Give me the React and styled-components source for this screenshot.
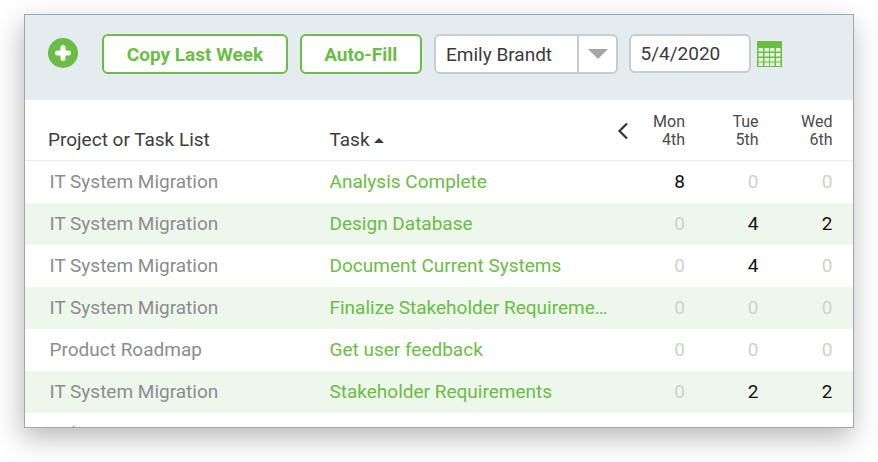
import React from "react";
import styled, { createGlobalStyle } from "styled-components";

const Global = createGlobalStyle`
  html, body { margin: 0; padding: 0; background: #fff; }
  body { width: 878px; height: 462px; overflow: hidden; font-family: Roboto, "Liberation Sans", sans-serif; }
  * { box-sizing: border-box; }
`;

const Page = styled.div`
  width: 878px;
  height: 462px;
  padding: 14px 24px 0;
`;
const Card = styled.div`
  width: 830px;
  height: 414px;
  border: 1px solid #a3a6a6;
  background: #fff;
  overflow: hidden;
  box-shadow: -2px 10px 26px rgba(0, 0, 0, 0.28);
`;
const Toolbar = styled.div`
  height: 85px;
  background: #e5ecef;
  display: flex;
  align-items: flex-start;
  padding: 19px 0 0 23px;
`;
const AddButton = styled.div`
  width: 30px;
  height: 30px;
  margin: 4px 24px 0 0;
  flex: none;
`;
const OutlineButton = styled.div`
  height: 40px;
  width: ${(p) => p.$w}px;
  margin-right: ${(p) => p.$gap}px;
  border: 2px solid #6abd45;
  border-radius: 6px;
  background: #fff;
  color: #6abd45;
  font-size: 19px;
  font-weight: 700;
  display: flex;
  align-items: center;
  justify-content: center;
`;
const Select = styled.div`
  width: 184px;
  height: 40px;
  margin-right: 11px;
  background: #fff;
  border: 2px solid #c9cccd;
  border-radius: 6px;
  display: flex;
  align-items: stretch;
  color: #3a3a3a;
  font-size: 19px;
`;
const SelectValue = styled.div`
  width: 143px;
  padding-left: 10px;
  display: flex;
  align-items: center;
  border-right: 2px solid #c9cccd;
`;
const SelectArrow = styled.div`
  flex: 1;
  display: flex;
  align-items: center;
  justify-content: center;
  &::after {
    content: "";
    border-left: 10px solid transparent;
    border-right: 10px solid transparent;
    border-top: 10px solid #a5a5a5;
  }
`;
const DateInput = styled.div`
  width: 122px;
  height: 39px;
  margin-right: 6px;
  padding-left: 9.5px;
  background: #fff;
  border: 2px solid #c9cccd;
  border-radius: 6px;
  display: flex;
  align-items: center;
  color: #3a3a3a;
  font-size: 19px;
`;
const CalendarWrap = styled.div`
  width: 25px;
  height: 26px;
  margin-top: 7px;
  flex: none;
`;
const Grid = styled.div`
  display: grid;
  grid-template-columns: 280px 282px 73.5px 73.5px 74px;
  padding: 0 20.5px 0 24.5px;
  align-items: center;
`;
const HeaderRow = styled(Grid)`
  height: 61px;
  border-bottom: 1px solid #e9ebeb;
  align-items: end;
  padding-bottom: 9px;
`;
const HeaderCell = styled.div`
  font-size: 19px;
  color: #3d3d3d;
  line-height: 22px;
  margin-left: ${(p) => p.$shift || 0}px;
  display: flex;
  align-items: center;
`;
const SortMark = styled.span`
  margin: 1px 0 0 4px;
  border-left: 5px solid transparent;
  border-right: 5px solid transparent;
  border-bottom: 5px solid #3d3d3d;
`;
const DayCell = styled.div`
  font-size: 16px;
  line-height: 18px;
  color: #4a4a4a;
  text-align: right;
  margin-bottom: 2px;
`;
const FirstDay = styled(DayCell)`
  display: flex;
  justify-content: space-between;
  align-items: center;
`;
const Chevron = styled.svg`
  width: 14px;
  height: 20px;
  margin: 0 0 0 4.5px;
  flex: none;
`;
const Row = styled(Grid)`
  height: 42px;
  background: ${(p) => (p.$alt ? "#edf7ec" : "#fff")};
  font-size: 19px;
  padding-bottom: 2px;
`;
const ProjectCell = styled.div`
  color: #8c8c8c;
`;
const TaskCell = styled.div`
  color: #6abd45;
  white-space: nowrap;
  overflow: hidden;
  text-overflow: ellipsis;
  padding-right: 4px;
`;
const HoursCell = styled.div`
  text-align: right;
  color: ${(p) => (p.$value ? "#111" : "#cdd3cd")};
`;

const rows = [
  ["IT System Migration", "Analysis Complete", 8, 0, 0],
  ["IT System Migration", "Design Database", 0, 4, 2],
  ["IT System Migration", "Document Current Systems", 0, 4, 0],
  ["IT System Migration", "Finalize Stakeholder Requirements", 0, 0, 0],
  ["Product Roadmap", "Get user feedback", 0, 0, 0],
  ["IT System Migration", "Stakeholder Requirements", 0, 2, 2],
  ["Release 10.1 Sprint", "Scan Server", 0, 0, 0],
];

export default function App() {
  return (
    <Page>
      <Global />
      <Card>
        <Toolbar>
          <AddButton>
            <svg width="30" height="30" viewBox="0 0 30 30">
              <circle cx="15" cy="15" r="15" fill="#6abd45" />
              <path d="M15 9.5v11M9.5 15h11" stroke="#fff" strokeWidth="5" strokeLinecap="round" />
            </svg>
          </AddButton>
          <OutlineButton $w={186} $gap={11.5}>Copy Last Week</OutlineButton>
          <OutlineButton $w={122.5} $gap={12}>Auto-Fill</OutlineButton>
          <Select>
            <SelectValue>Emily Brandt</SelectValue>
            <SelectArrow />
          </Select>
          <DateInput>5/4/2020</DateInput>
          <CalendarWrap>
            <svg width="25" height="26" viewBox="0 0 25 26">
              <rect x="0" y="0" width="25" height="26" fill="#6abd45" />
              {[7, 12, 17, 21.5].map((y) =>
                [1.5, 7.5, 13, 19].map((x) => (
                  <rect key={`${x}-${y}`} x={x} y={y} width="4.5" height="3.5" fill="#e4f3dd" />
                ))
              )}
            </svg>
          </CalendarWrap>
        </Toolbar>
        <HeaderRow>
          <HeaderCell $shift={-1.5}>Project or Task List</HeaderCell>
          <HeaderCell>Task<SortMark /></HeaderCell>
          <FirstDay>
            <Chevron viewBox="0 0 14 20">
              <path d="M11 2.5 3.5 10 11 17.5" fill="none" stroke="#333" strokeWidth="2.2" />
            </Chevron>
            <span>Mon<br />4th</span>
          </FirstDay>
          <DayCell>Tue<br />5th</DayCell>
          <DayCell>Wed<br />6th</DayCell>
        </HeaderRow>
        {rows.map(([project, task, a, b, c], i) => (
          <Row key={i} $alt={i % 2 === 1}>
            <ProjectCell>{project}</ProjectCell>
            <TaskCell>{task}</TaskCell>
            <HoursCell $value={a}>{a}</HoursCell>
            <HoursCell $value={b}>{b}</HoursCell>
            <HoursCell $value={c}>{c}</HoursCell>
          </Row>
        ))}
      </Card>
    </Page>
  );
}
